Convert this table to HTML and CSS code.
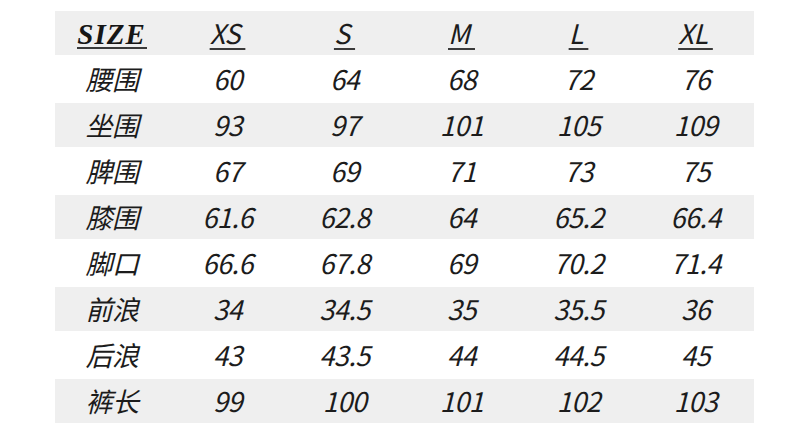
FILE: index.html
```html
<!DOCTYPE html>
<html lang="zh-CN">
<head>
<meta charset="utf-8">
<title>Size chart</title>
<link rel="stylesheet" href="styles.css">
</head>
<body>
<table class="chart">
  <colgroup>
    <col class="c-label"><col class="c-size"><col class="c-size"><col class="c-size"><col class="c-size"><col class="c-size">
  </colgroup>
  <tr class="row grey head">
    <th><span class="size-title">SIZE</span></th>
    <th><span class="size-name">XS&nbsp;</span></th>
    <th><span class="size-name">S&nbsp;</span></th>
    <th><span class="size-name">M&nbsp;</span></th>
    <th><span class="size-name">L&nbsp;</span></th>
    <th><span class="size-name">XL&nbsp;</span></th>
  </tr>
  <tr class="row white"><td>腰围</td><td>60</td><td>64</td><td>68</td><td>72</td><td>76</td></tr>
  <tr class="row grey"><td>坐围</td><td>93</td><td>97</td><td>101</td><td>105</td><td>109</td></tr>
  <tr class="row white"><td>脾围</td><td>67</td><td>69</td><td>71</td><td>73</td><td>75</td></tr>
  <tr class="row grey"><td>膝围</td><td>61.6</td><td>62.8</td><td>64</td><td>65.2</td><td>66.4</td></tr>
  <tr class="row white"><td>脚口</td><td>66.6</td><td>67.8</td><td>69</td><td>70.2</td><td>71.4</td></tr>
  <tr class="row grey"><td>前浪</td><td>34</td><td>34.5</td><td>35</td><td>35.5</td><td>36</td></tr>
  <tr class="row white"><td>后浪</td><td>43</td><td>43.5</td><td>44</td><td>44.5</td><td>45</td></tr>
  <tr class="row grey"><td>裤长</td><td>99</td><td>100</td><td>101</td><td>102</td><td>103</td></tr>
</table>
</body>
</html>
```

FILE: styles.css
```css
html, body {
  margin: 0;
  padding: 0;
  background: #ffffff;
}

body {
  padding: 11px 0 0 55px;
  font-family: "Noto Sans CJK SC", "Noto Sans", sans-serif;
  color: #1c1c1c;
}

.chart {
  border-collapse: collapse;
  border-spacing: 0;
  table-layout: fixed;
  width: 699px;
}

.c-label { width: 114px; }
.c-size { width: 117px; }

.chart th,
.chart td {
  padding: 0;
  text-align: center;
  vertical-align: middle;
  font-style: italic;
  font-weight: 400;
  font-size: 27px;
  line-height: 30px;
  letter-spacing: -0.5px;
}

.row.grey { background: #efefef; height: 44px; }
.row.white { background: #ffffff; height: 48px; }

.size-title {
  font-family: "Liberation Serif", serif;
  font-weight: 700;
  font-style: italic;
  font-size: 29px;
  letter-spacing: 1px;
  color: #161616;
  border-bottom: 2px solid #3a3a3a;
  padding: 0 1px 0 0;
  line-height: 25px;
  display: inline-block;
}

.size-name {
  text-decoration: underline;
  text-decoration-thickness: 1.5px;
  text-underline-offset: 4px;
  text-decoration-color: #3a3a3a;
  white-space: pre;
}
```
